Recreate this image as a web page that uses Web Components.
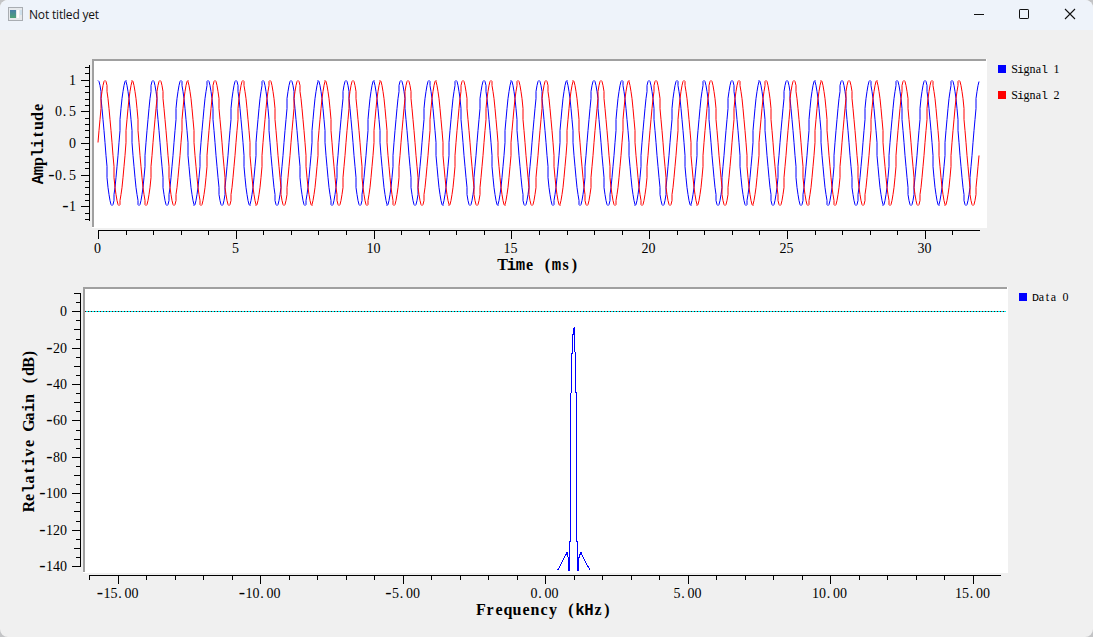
<!DOCTYPE html>
<html lang="en">
<head>
<meta charset="utf-8">
<title>Not titled yet</title>
<style>
html,body{margin:0;height:100%;overflow:hidden;background:#c3c4c6}
</style>
</head>
<body>
<app-window>
  <title-bar slot="bar">Not titled yet</title-bar>
  <plot-panel style="height:250px">
    <time-plot></time-plot>
    <plot-legend style="padding:35px 0 0 8px">
      <legend-item color="#00f" label="Signal 1"></legend-item>
      <legend-item color="#f00" label="Signal 2"></legend-item>
    </plot-legend>
  </plot-panel>
  <plot-panel style="height:357px">
    <frequency-plot></frequency-plot>
    <plot-legend style="padding:13px 0 0 9px">
      <legend-item color="#00f" label="Data 0"></legend-item>
    </plot-legend>
  </plot-panel>
</app-window>
<script>
const define = (name, html) => customElements.define(name, class extends HTMLElement {
  connectedCallback() {
    if (this.shadowRoot) return;
    const root = this.attachShadow({ mode: 'open' });
    root.innerHTML = typeof html === 'function' ? html(this) : html;
  }
});

// Fixed-cell text: every character is centred in a cell of the given advance.
// Letters too wide or too narrow for a cell come from the monospaced face.
function cells(x, y, str, adv, size, extra = '') {
  let out = '';
  [...str].forEach((c, i) => {
    const mono = 'milAHDk'.includes(c);
    const dx = c === '.' ? -1 : 0;
    const own = c === '-' ? ' font-size="19"' : mono ? ` font-size="${size * .98}"` : '';
    out += `<tspan x="${x + adv * (i + .5) + dx}"${mono ? ' font-family="Liberation Mono, monospace"' : ''}${own}>${c}</tspan>`;
  });
  return `<text y="${y}" font-size="${size}" text-anchor="middle" xml:space="preserve" ${extra}>${out}</text>`;
}
const rect = (x, y, w, h, f = '#000') => `<rect x="${x}" y="${y}" width="${w}" height="${h}" fill="${f}"/>`;
const svgStyle = `<style>:host{display:block;flex:none}svg{display:block;font-family:"Liberation Serif",serif;shape-rendering:crispEdges}</style>`;
const frame = (x, y, w, h) => rect(x, y, w, h, '#fff') + rect(x, y, w - 1, 2, '#a0a0a0') + rect(x, y, 2, h - 1, '#a0a0a0');
const number = (right, y, s) => cells(right - 7 * s.length, y, s, 7, 14);
const centred = (cx, y, s) => cells(cx - 3.5 * s.length, y, s, 7, 14);

define('app-window', `<style>
:host{display:flex;flex-direction:column;width:1093px;height:637px;background:#f0f0f0;border-radius:8px;overflow:hidden}
</style><slot name="bar"></slot><slot></slot>`);

define('title-bar', `<style>
:host{display:flex;align-items:center;height:30px;flex:none;background:#eef3fa;font:12px "Open Sans","Noto Sans",sans-serif;color:#111;letter-spacing:-.18px}
.icon{margin:-3px 6px 0 8px}
.name{flex:1;line-height:16px}
.btn{width:46px;height:30px;display:block}
</style>
<svg class="icon" width="15" height="14" viewBox="0 0 15 14" shape-rendering="crispEdges">
<defs><linearGradient id="g" x2="0" y2="1"><stop offset="0" stop-color="#4a7fa8"/><stop offset="1" stop-color="#4fa376"/></linearGradient></defs>
<rect width="15" height="14" fill="#a9adb2"/><rect x="1" y="1" width="13" height="12" fill="#e6e9ec"/>
<rect x="2" y="3" width="6" height="8" fill="url(#g)"/><rect x="9" y="3" width="2" height="8" fill="#fff"/><rect x="12" y="3" width="2" height="5" fill="#cfe0ec"/></svg>
<span class="name"><slot></slot></span>
<svg class="btn" viewBox="0 0 46 30"><path d="M19 14.5h10" stroke="#111"/></svg>
<svg class="btn" viewBox="0 0 46 30"><rect x="18.5" y="9.5" width="9" height="9" rx=".6" fill="none" stroke="#111"/></svg>
<svg class="btn" viewBox="0 0 46 30"><path d="M18 9l10 10M28 9l-10 10" stroke="#111" stroke-width="1.1"/></svg>`);

define('plot-panel', `<style>:host{display:flex;flex:none}</style><slot></slot>`);
define('plot-legend', `<style>:host{display:flex;flex-direction:column;gap:18px;box-sizing:border-box}</style><slot></slot>`);

define('legend-item', el => `<style>
:host{display:flex;gap:5px;height:8px}
i{width:8px;height:8px;background:${el.getAttribute('color')}}
svg{overflow:visible;font-family:"Liberation Serif",serif}
</style><i></i><svg width="60" height="8">${cells(.5, 8, el.getAttribute('label'), 6, 12)}</svg>`);

define('time-plot', () => {
  let s = frame(92, 59, 895, 169);
  // vertical scale, amplitude
  s += rect(89, 65, 1, 156);
  for (let i = -12; i <= 12; i++) {
    const y = Math.round(143 - i * 6.32);
    s += i % 5 ? rect(85, y, 4, 1) : rect(81, y, 8, 1);
  }
  [['1', 85], ['0.5', 116], ['0', 148], ['-0.5', 180], ['-1', 211]].forEach(([t, y]) => s += number(76, y, t));
  // horizontal scale, milliseconds
  s += rect(98, 230, 882, 1);
  for (let i = 0; i < 32; i++) {
    const x = Math.round(98 + i * 27.56);
    s += rect(x, 230, 1, i % 5 ? 5 : 9);
    if (i % 5 === 0) s += centred(x - .5, 253, String(i));
  }
  // 1 kHz tone sampled at 32 kHz, both quadratures
  const curve = (fn, color) => {
    const pts = [];
    for (let k = 0; k < 1024; k++)
      pts.push(Math.round(98 + k / 32 * 27.56) + ',' + Math.floor(142.9 - 62.4 * fn(2 * Math.PI * k / 32)));
    return `<polyline points="${pts.join(' ')}" transform="translate(0 .5)" fill="none" stroke="${color}" shape-rendering="auto"/>`;
  };
  s += curve(Math.cos, '#00f') + curve(Math.sin, '#f00');
  s += cells(498, 270, 'Time (ms)', 9, 16, 'font-weight="bold"');
  s += cells(0, 0, 'Amplitude', 9, 16, 'font-weight="bold" transform="translate(43 184) rotate(-90)"');
  return svgStyle + `<svg width="990" height="250" viewBox="0 30 990 250">${s}</svg>`;
});

define('frequency-plot', () => {
  let s = frame(83, 287, 925, 286);
  s += rect(80, 293, 1, 274);
  for (let i = 0; i <= 30; i++) {
    const y = Math.round(293 + i * 9.1), db = 10 - i * 5;
    const len = db % 20 === 0 ? 8 : db % 10 === 0 ? 6 : 4;
    s += rect(80 - len, y, len, 1);
    if (db % 20 === 0) s += number(67, y + 5, String(db));
  }
  s += rect(89, 575, 912, 1);
  for (let i = -16; i < 16; i++) {
    const x = Math.round(545.3 + i * 28.5);
    s += rect(x, 575, 1, i % 5 ? 5 : 9);
    if (i % 5 === 0) s += centred(x - .5, 598, i.toFixed(2));
  }
  // zero decibel guide
  s += rect(85, 311, 921, 1, '#00f0f0');
  s += `<path d="M85 311.5H1006" stroke="#600000" stroke-dasharray="1 2"/>`;
  // main lobe, one column at a time
  [[574,327,25],[573,328,7],[572,334,20],[571,353,40],[575,352,41],[570,393,149],[576,392,150],[569,541,30],[577,541,30],
   [568,557,14],[578,557,14],[567,552,5],[566,552,2],[579,554,4],[580,552,3],[581,552,2]]
    .forEach(([x, y, h]) => s += rect(x, y, 1, h, '#00f'));
  s += `<path d="M566.5 553.5L557.5 570.5M581.5 553.5L584.5 560.5L590.5 570.5" fill="none" stroke="#00f"/>`;
  s += cells(476.5, 615, 'Frequency (kHz)', 9, 16, 'font-weight="bold"');
  s += cells(0, 0, 'Relative Gain (dB)', 9, 16, 'font-weight="bold" transform="translate(34 511) rotate(-90)"');
  return svgStyle + `<svg width="1010" height="357" viewBox="0 280 1010 357">${s}</svg>`;
});
</script>
</body>
</html>
